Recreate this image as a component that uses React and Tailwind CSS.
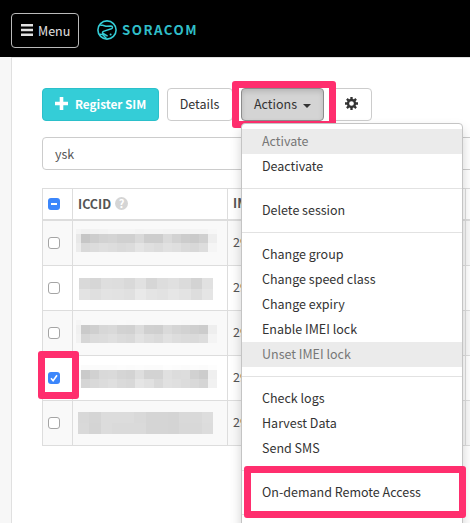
import React from "react";

const ICCID_A = {
  box: "left-[3px] top-[8px]",
  cell: "w-[9.07px] h-[9px]",
  fringe: true,
  rows: [
    ["f4", "f1", "f2", "f3", "f5", "f5", "f5", "f3", "f4", "f4", "f3", "f3", "f3", "f4", "f4", "f7"],
    ["e8", "c6", "cd", "d2", "d4", "d0", "d0", "d9", "cd", "cd", "da", "d2", "cc", "ca", "d0", "ee"],
    ["ec", "d9", "dc", "df", "dd", "da", "dc", "e4", "df", "dc", "e1", "df", "da", "d8", "dd", "f5"],
  ],
};
const ICCID_B = {
  box: "left-[6px] top-[12px]",
  cell: "w-[11.17px] h-[11px]",
  rows: [
    ["d9", "d6", "de", "dd", "d9", "e1", "d6", "dd", "e0", "db", "d3", "e1"],
    ["e3", "df", "e3", "e2", "e0", "e9", "e4", "e2", "e6", "e3", "dd", "e5"],
  ],
};
const ICCID_C = {
  box: "left-[3px] top-[9px]",
  cell: "w-[9.07px] h-[9px]",
  fringe: true,
  rows: [
    ["f5", "f8", "f9", "f8", "f8", "f9", "f8", "f9", "f8", "f8", "f9", "f9", "f8", "f9", "f8", "f9"],
    ["f0", "ca", "cf", "d7", "d9", "d2", "d1", "dc", "d0", "cf", "da", "d5", "d2", "cf", "cc", "ee"],
    ["f2", "d6", "db", "dc", "df", "db", "d9", "e2", "dd", "da", "e1", "dd", "db", "da", "dd", "f4"],
  ],
};
const ICCID_D = {
  box: "left-[3px] top-[9px]",
  cell: "w-[9.07px] h-[9px]",
  fringe: true,
  rows: [
    ["fe", "fb", "fb", "fb", "fb", "fc", "fb", "fc", "fb", "fb", "fd", "fc", "fb", "fc", "fb", "fd"],
    ["fa", "ca", "d1", "d9", "da", "d5", "d3", "de", "d3", "d3", "e0", "dc", "dd", "d1", "cc", "ef"],
    ["fb", "d5", "d9", "dc", "df", "da", "d8", "e5", "e1", "d9", "e1", "df", "dc", "d9", "d5", "f1"],
  ],
};
const ICCID_E = {
  box: "left-[5px] top-[11px]",
  cell: "w-[11.25px] h-[11px]",
  rows: [
    ["d8", "d5", "dc", "dc", "dc", "d9", "d5", "d5", "d4", "d9", "d9", "dd"],
    ["d9", "d4", "dc", "da", "da", "da", "d5", "d5", "d4", "d8", "d8", "dc"],
  ],
};

const ROWS = [
  { mosaic: ICCID_A },
  { mosaic: ICCID_B },
  { mosaic: ICCID_C },
  { mosaic: ICCID_D, checked: true },
  { mosaic: ICCID_E },
];

const MENU = [
  [{ label: "Activate", off: true }, { label: "Deactivate" }],
  [{ label: "Delete session" }],
  [
    { label: "Change group" },
    { label: "Change speed class" },
    { label: "Change expiry" },
    { label: "Enable IMEI lock" },
    { label: "Unset IMEI lock", off: true },
  ],
  [{ label: "Check logs" }, { label: "Harvest Data" }, { label: "Send SMS" }],
  [{ label: "On-demand Remote Access" }],
];

// Blurred-out ICCID; a fringed mosaic has a narrow first column and a short first row.
function Mosaic({ data }) {
  return (
    <div className={"absolute " + data.box}>
      {data.rows.map((row, y) => (
        <div key={y} className={"flex " + (data.fringe && y === 0 ? "h-[5px] overflow-hidden" : "")}>
          {row.map((v, x) => (
            <span
              key={x}
              className={"shrink-0 " + (data.fringe && x === 0 ? "w-[5px] h-[9px]" : data.cell)}
              style={{ backgroundColor: "#" + v + v + v }}
            />
          ))}
        </div>
      ))}
    </div>
  );
}

function Checkbox({ checked, partial }) {
  if (checked || partial) {
    return (
      <svg className="size-3 rounded-[3px] bg-[#3b86fb]" viewBox="0 0 12 12" fill="none" stroke="#fff">
        {partial ? <path d="M3 6h6" strokeWidth="2" /> : <path d="M3 6.3l2.1 2.4L9 3.2" strokeWidth="1.6" />}
      </svg>
    );
  }
  return <span className="size-3 rounded-[3px] border border-[#a5a5a5] bg-white" />;
}

function Header() {
  return (
    <header className="flex h-[57px] items-start bg-black pl-[11px] pt-[13px]">
      <button className="flex h-[35px] w-[68px] items-center rounded border border-[#bbb] pl-[9px] text-[12.5px] text-[#e2e2e2]">
        <svg className="mr-[5px] h-3 w-3 -translate-y-px" viewBox="0 0 12 12" fill="#e2e2e2">
          <path d="M0 0h12v2.6H0zM0 4.7h12v2.6H0zM0 9.4h12v2.6H0z" />
        </svg>
        <span className="pb-px leading-[31px]">Menu</span>
      </button>
      <div className="ml-[18px] mt-[7px] flex items-center">
        <svg className="size-5" viewBox="0 0 20 20" fill="none" stroke="#34cdd7">
          <circle cx="10" cy="10" r="9.1" strokeWidth="1.6" />
          <path
            d="M3.2 5.2h2.6l3 1.1 5.2-.3c1.8 0 2.1 2.2.4 2.8L6.4 11.4c-1.2.5-1.1 1.6-.2 2.1l4.4 2.6M2.6 14.2l3 .2 3.8 4"
            strokeWidth="1.5"
          />
          <circle cx="13.6" cy="14.6" r="1" fill="#34cdd7" stroke="none" />
        </svg>
        <span className="ml-[5px] text-[13.3px] font-bold leading-5 tracking-[1.5px] text-[#30bec8]">SORACOM</span>
      </div>
    </header>
  );
}

function Toolbar() {
  return (
    <div className="flex h-[33px] text-[12.5px] leading-[30px] text-[#333]">
      <button className="flex w-[117px] items-center rounded border border-[#2bc0ca] bg-[#34cdd7] pl-3 text-[11.75px] font-bold text-white">
        <svg className="mr-[7px] size-[13px] -translate-y-px" viewBox="0 0 13 13" fill="#fff">
          <path d="M4.7 0h3.6v4.7H13v3.6H8.3V13H4.7V8.3H0V4.7h4.7z" />
        </svg>
        <span className="pb-px leading-[30px]">Register SIM</span>
      </button>
      <button className="ml-2 w-[66px] rounded border border-[#ccc] bg-white pb-[2px] pr-px leading-[29px]">Details</button>
      <div className="relative ml-2 flex">
        <button className="flex w-[83px] items-center rounded border border-[#8c8c8c] bg-[#d4d4d4] pl-3 shadow-[inset_0_3px_5px_rgba(0,0,0,0.125)]">
          <span className="pb-px leading-[30px]">Actions</span>
          <span className="ml-[6px] mt-[3px] border-x-4 border-t-4 border-x-transparent border-t-[#333]" />
        </button>
        <div className="absolute left-[-9px] top-[-7px] h-[47px] w-[104px] rounded-[3px] border-[7px] border-[#ff2e6e]" />
      </div>
      <button className="ml-2 flex w-10 items-center justify-center rounded border border-[#ccc] bg-white">
        <svg className="mr-px size-[13px] -translate-y-px" viewBox="0 0 14 14" fill="none" stroke="#333">
          <circle cx="7" cy="7" r="3.8" strokeWidth="2.5" />
          <path d="M7 0v2.5M7 11.5V14M0 7h2.5M11.5 7H14M2.05 2.05l1.8 1.8M10.15 10.15l1.8 1.8M2.05 11.95l1.8-1.8M10.15 3.85l1.8-1.8" strokeWidth="2.5" />
        </svg>
      </button>
    </div>
  );
}

function SimTable() {
  const cols = "grid w-[469px] grid-cols-[30px_155px_238px_46px] divide-x divide-[#ddd] border-l border-[#ddd]";
  return (
    <div className="mt-[18px] border-t border-[#ddd] text-[12.5px] text-[#555]">
      <div className={cols + " h-8 border-b-2 font-bold"}>
        <div className="flex items-center pl-[5px]"><Checkbox partial /></div>
        <div className="flex items-center pl-[5px]">
          <span className="pb-px leading-[28px]">ICCID</span>
          <span className="ml-1 flex size-[13px] -translate-y-px items-center justify-center rounded-full bg-[#d5d5d5] text-[11px] leading-[13px] text-white">?</span>
        </div>
        <div className="pl-[5px] leading-[28px]">IMSI</div>
        <div />
      </div>
      {ROWS.map((row, i) => (
        <div key={i} className={cols + " h-[45px] border-b " + (i % 2 ? "bg-white" : "bg-[#f9f9f9]")}>
          <div className="relative flex items-center pl-[5px]">
            <Checkbox checked={row.checked} />
            {row.checked && (
              <div className="absolute left-[-5px] top-[-5px] z-10 h-12 w-[41px] rounded-[3px] border-[7px] border-[#ff2e6e]" />
            )}
          </div>
          <div className="relative"><Mosaic data={row.mosaic} /></div>
          <div className="pl-[5px] leading-[42px]">295</div>
          <div />
        </div>
      ))}
    </div>
  );
}

function ActionsMenu() {
  return (
    <div className="absolute left-[241px] top-[123px] z-20 h-[440px] w-[222px] rounded border border-[#c4c4c4] bg-white pt-[5px] text-[12.5px] text-[#333] shadow-[0_6px_12px_rgba(0,0,0,0.175)]">
      {MENU.map((group, i) => (
        <div key={i}>
          {group.map((item) => (
            <div key={item.label} className={"h-[25px] pl-5 leading-[24px] " + (item.off ? "bg-[#ebebeb] text-[#777]" : "")}>
              {item.label}
            </div>
          ))}
          <div className="my-[9px] h-px bg-[#e2e2e2]" />
        </div>
      ))}
      <div className="absolute left-[2px] top-[342px] h-[52px] w-[222px] rounded-[3px] border-[7px] border-[#ff2e6e]" />
    </div>
  );
}

export default function App() {
  return (
    <div className="relative h-[523px] w-[470px] overflow-hidden bg-[#f7f7f7] font-['Noto_Sans_CJK_JP',sans-serif]">
      <Header />
      <main className="ml-[11px] h-[466px] border-l border-t border-[#e0e0e0] bg-white pl-[30px] pt-[30px]">
        <Toolbar />
        <div className="mt-4 flex h-[33px] w-[460px] items-center rounded border border-[#ccc] pl-3 text-[12.5px] leading-[31px] text-[#555]">ysk</div>
        <SimTable />
      </main>
      <ActionsMenu />
    </div>
  );
}
